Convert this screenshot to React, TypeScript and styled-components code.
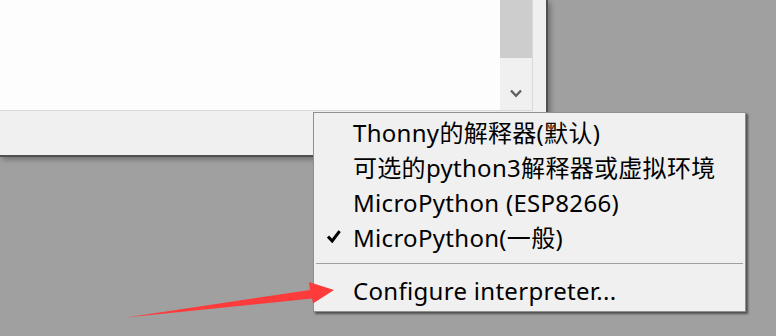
import React from "react";
import styled, { createGlobalStyle } from "styled-components";

const Global = createGlobalStyle`
  html, body { margin: 0; padding: 0; background: #a0a0a0; }
  body {
    width: 776px; height: 336px; overflow: hidden;
    font-family: "Noto Sans", "Noto Sans CJK SC", sans-serif;
  }
`;

const Stage = styled.div`
  position: relative;
  width: 776px;
  height: 336px;
  background: #a0a0a0;
  overflow: hidden;
`;

const Window = styled.div`
  width: 546px;
  height: 155px;
  background: #f0f0f0;
  border-right: 2px solid #505050;
  border-bottom: 2px solid #505050;
  box-shadow: 2px 2px 6px rgba(0, 0, 0, 0.35);
  display: flex;
  flex-direction: column;
`;

const EditorRow = styled.div`
  display: flex;
  width: 533px;
  height: 111px;
  box-sizing: border-box;
  border-right: 1px solid #d9d9d9;
  border-bottom: 1px solid #d9d9d9;
`;

const TextArea = styled.div`
  width: 500px;
  background: #fdfdfd;
`;

const Scrollbar = styled.div`
  width: 32px;
  background: #f0f0f0;
  display: flex;
  flex-direction: column;
`;

const Thumb = styled.div`
  height: 58px;
  background: #cdcdcd;
`;

const Trough = styled.div`
  flex: 1;
  display: flex;
  align-items: flex-end;
  justify-content: center;
  padding-bottom: 12px;
`;

const Menu = styled.div`
  position: absolute;
  left: 313px;
  top: 112px;
  width: 433px;
  height: 200px;
  box-sizing: border-box;
  background: #f0f0f0;
  border: 1px solid #8f8f8f;
  box-shadow: 2px 2px 2px rgba(0, 0, 0, 0.5);
  display: flex;
  flex-direction: column;
  padding-bottom: 5px;
`;

const Item = styled.div`
  height: 35px;
  box-sizing: border-box;
  padding-top: 4px;
  display: grid;
  grid-template-columns: 39px 1fr;
  font-size: 24px;
  line-height: 31px;
  letter-spacing: 0.3px;
  color: #000;
  white-space: nowrap;
`;

const CheckCell = styled.div`
  display: flex;
  align-items: center;
  padding-left: 13px;
  padding-bottom: 2px;
`;

const Separator = styled.div`
  height: 1px;
  margin: 10px 2px 7px 2px;
  background: #a0a0a0;
`;

const ArrowLayer = styled.svg`
  position: absolute;
  left: 0;
  top: 0;
  width: 776px;
  height: 336px;
  pointer-events: none;
`;

type MenuEntry = { label: string; checked?: boolean };

const entries: MenuEntry[] = [
  { label: "Thonny的解释器(默认)" },
  { label: "可选的python3解释器或虚拟环境" },
  { label: "MicroPython (ESP8266)" },
  { label: "MicroPython(一般)", checked: true },
];

const Check = () => (
  <svg width="14" height="13" viewBox="0 0 14 13">
    <path d="M1 6.5 L5.2 11 L12.6 1.2" fill="none" stroke="#000" strokeWidth="3" strokeLinejoin="miter" />
  </svg>
);

const Chevron = () => (
  <svg width="12" height="9" viewBox="0 0 12 9">
    <path d="M1 1.5 L6 6.8 L11 1.5" fill="none" stroke="#606060" strokeWidth="2.4" />
  </svg>
);

const MenuItem = ({ entry }: { entry: MenuEntry }) => (
  <Item>
    <CheckCell>{entry.checked ? <Check /> : null}</CheckCell>
    <span>{entry.label}</span>
  </Item>
);

export default function App() {
  return (
    <>
      <Global />
      <Stage>
        <Window>
          <EditorRow>
            <TextArea />
            <Scrollbar>
              <Thumb />
              <Trough>
                <Chevron />
              </Trough>
            </Scrollbar>
          </EditorRow>
        </Window>
        <Menu>
          {entries.map((e) => (
            <MenuItem key={e.label} entry={e} />
          ))}
          <Separator />
          <MenuItem entry={{ label: "Configure interpreter..." }} />
        </Menu>
        <ArrowLayer viewBox="0 0 776 336">
          <polygon
            points="126,317.5 310,290 309,282 334,290 313,303.5 312,298.5"
            fill="#fd3b3b"
          />
        </ArrowLayer>
      </Stage>
    </>
  );
}
